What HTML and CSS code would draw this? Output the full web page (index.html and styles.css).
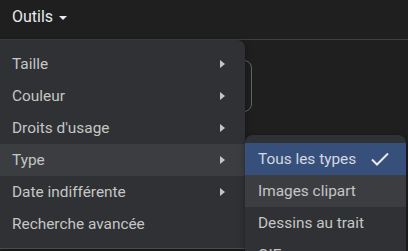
FILE: index.html
```html
<!DOCTYPE html>
<html lang="fr">
<head>
<meta charset="utf-8">
<link rel="stylesheet" href="styles.css">
</head>
<body>
<div class="page">
  <header class="topbar">
    <button class="tools-btn">Outils <span class="caret"></span></button>
  </header>
  <main class="content">
    <div class="bg-box"></div>
    <ul class="menu main-menu">
      <li class="item"><span>Taille</span><span class="arrow"></span></li>
      <li class="item"><span>Couleur</span><span class="arrow"></span></li>
      <li class="item"><span>Droits d'usage</span><span class="arrow"></span></li>
      <li class="item hover"><span>Type</span><span class="arrow"></span></li>
      <li class="item"><span>Date indifférente</span><span class="arrow"></span></li>
      <li class="item"><span>Recherche avancée</span></li>
    </ul>
    <ul class="menu sub-menu">
      <li class="item selected"><span>Tous les types</span>
        <svg class="check" width="20" height="16" viewBox="0 0 20 16"><path d="M2 8.5 L7 13.5 L18 2.5" fill="none" stroke="#e8eaed" stroke-width="2"/></svg>
      </li>
      <li class="item hover"><span>Images clipart</span></li>
      <li class="item"><span>Dessins au trait</span></li>
      <li class="item"><span>GIF</span></li>
    </ul>
  </main>
</div>
</body>
</html>
```
FILE: styles.css
```css
* { box-sizing: border-box; }
html, body { margin: 0; padding: 0; }
body {
  width: 408px;
  height: 251px;
  overflow: hidden;
  background: #202124;
  font-family: Roboto, "Liberation Sans", Arial, sans-serif;
}
.page { display: flex; flex-direction: column; height: 100%; }
.topbar {
  height: 40px;
  flex: none;
  display: flex;
  align-items: center;
  padding: 0 12px;
  background: #1f1f1f;
  border-bottom: 1px solid #3c4043;
}
.tools-btn {
  display: flex;
  align-items: center;
  gap: 6px;
  background: none;
  border: 0;
  padding: 0;
  margin-top: -6px;
  color: #e8eaed;
  font-family: Roboto, "Liberation Sans", Arial, sans-serif;
  font-size: 16px;
  font-weight: 400;
}
.caret {
  width: 0; height: 0;
  border-left: 4px solid transparent;
  border-right: 4px solid transparent;
  border-top: 4px solid #e8eaed;
  margin-top: 2px;
}
.content { position: relative; flex: 1; background: #1f1f1f; }
.bg-box {
  position: absolute;
  left: 180px; top: 20px;
  width: 72px; height: 52px;
  border: 1px solid #5f6368;
  border-radius: 8px;
}
.menu {
  list-style: none;
  margin: 0;
  padding: 8px 0;
  background: #303134;
  position: absolute;
  box-shadow: 0 2px 6px rgba(0,0,0,.35);
}
.main-menu {
  left: 0; top: 0;
  width: 245px;
  height: 209px;
  border-radius: 0 8px 0 0;
  border-bottom: 1px solid #4a4c50;
}
.sub-menu {
  left: 245px; top: 95px;
  width: 161px;
  border-radius: 8px 8px 0 0;
  height: 140px;
  overflow: hidden;
}
.item {
  height: 32px;
  display: flex;
  align-items: center;
  justify-content: space-between;
  padding: 0 20px 0 12px;
  color: #c4c7c5;
  font-size: 15.4px;
}
.sub-menu .item { padding: 0 16px 0 13px; }
.item.hover { background: #3c3d41; }
.item.selected { background: #37507b; color: #d4d8e0; }
.arrow {
  width: 0; height: 0;
  border-top: 4px solid transparent;
  border-bottom: 4px solid transparent;
  border-left: 5px solid #c4c7c5;
}
.check { flex: none; }
```
